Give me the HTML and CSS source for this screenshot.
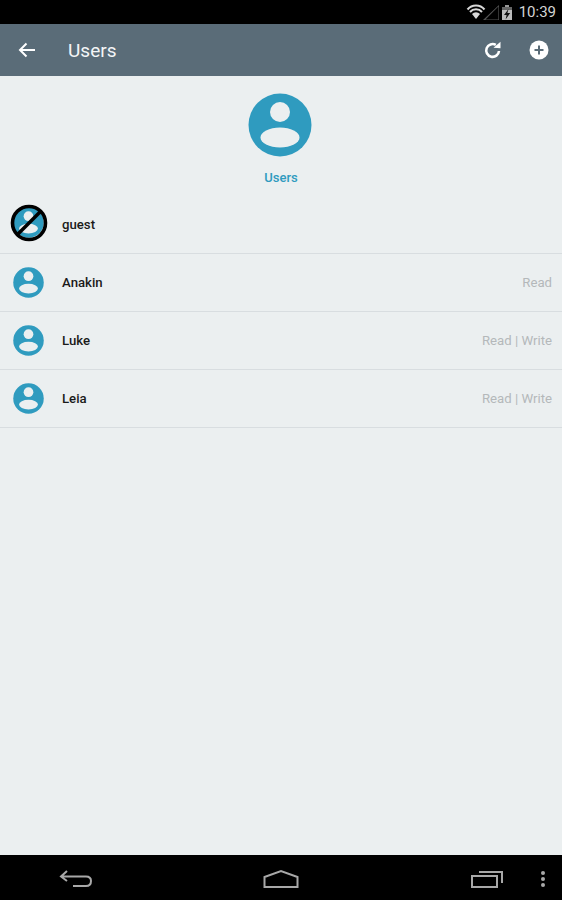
FILE: index.html
```html
<!DOCTYPE html>
<html lang="en">
<head>
    <title>Users</title>
    <link rel="stylesheet" href="styles.css">
</head>
<body>
    <svg class="defs" width="0" height="0">
        <symbol id="person" viewBox="0 0 64 64">
            <circle cx="32" cy="32" r="31.5" fill="#2f9bbf"/>
            <circle cx="32" cy="19" r="10" fill="#ebeff0"/>
            <ellipse cx="32" cy="44.5" rx="19.5" ry="10" fill="#ebeff0"/>
        </symbol>
    </svg>

    <div class="status-bar">
        <svg class="status-icons" width="48" height="20" viewBox="0 0 48 20">
            <path d="M1.5 7.5 A11 11 0 0 1 18.5 7.5 M4 10 A8 8 0 0 1 16 10" fill="none" stroke="#d8d8d8" stroke-width="2"/>
            <path d="M6 12 A5.5 5.5 0 0 1 14 12 L10 17 Z" fill="#d8d8d8"/>
            <path d="M17 18 L33 18 L33 3 Z M19.5 17.4 L32.4 17.4 L32.4 4.5 Z" fill="#555" fill-rule="evenodd"/>
            <rect x="36" y="5" width="10" height="13" fill="#bbb"/>
            <rect x="36" y="5" width="10" height="3" fill="#666"/>
            <rect x="39" y="3" width="4" height="2" fill="#999"/>
            <path d="M42.5 7 L38 13 L40.6 13 L39.6 17.5 L44.2 11 L41.4 11 Z" fill="#111"/>
        </svg>
        <span class="clock">10:39</span>
    </div>

    <nav class="navbar">
        <svg class="back" width="18" height="16" viewBox="0 0 18 16">
            <path d="M17 8 H2 M8.5 1.5 L2 8 L8.5 14.5" fill="none" stroke="#fff" stroke-width="2"/>
        </svg>
        <div class="title">Users</div>
        <svg class="refresh" width="18" height="18" viewBox="0 0 18 18">
            <path d="M15 10 A6.4 6.4 0 1 1 11.8 3.9" fill="none" stroke="#fff" stroke-width="2.6"/>
            <path d="M9.5 6.8 L16.5 7.2 L16.5 0.8 Z" fill="#fff"/>
        </svg>
        <svg class="add" width="20" height="20" viewBox="0 0 20 20">
            <circle cx="10" cy="10" r="9.5" fill="#fff"/>
            <path d="M10 5.5 V14.5 M5.5 10 H14.5" stroke="#5a6c78" stroke-width="2"/>
        </svg>
    </nav>

    <div class="content">
        <div class="header">
            <svg class="header-icon"><use href="#person"/></svg>
            <div class="header-label">Users</div>
        </div>

        <ul class="users">
            <li class="user">
                <span class="avatar avatar-guest">
                    <svg class="avatar-icon"><use href="#person"/></svg>
                    <svg class="ban" width="38" height="38" viewBox="0 0 38 38">
                        <circle cx="19" cy="19" r="16.5" fill="none" stroke="#000" stroke-width="3.6"/>
                        <path d="M7 31 L31 7" stroke="#000" stroke-width="3.6"/>
                    </svg>
                </span>
                <span class="name">guest</span>
            </li>
            <li class="user">
                <span class="avatar"><svg class="avatar-icon"><use href="#person"/></svg></span>
                <span class="name">Anakin</span>
                <span class="perm">Read</span>
            </li>
            <li class="user">
                <span class="avatar"><svg class="avatar-icon"><use href="#person"/></svg></span>
                <span class="name">Luke</span>
                <span class="perm">Read | Write</span>
            </li>
            <li class="user">
                <span class="avatar"><svg class="avatar-icon"><use href="#person"/></svg></span>
                <span class="name">Leia</span>
                <span class="perm">Read | Write</span>
            </li>
        </ul>
    </div>

    <div class="bottom-bar">
        <svg class="nav-back" width="34" height="20" viewBox="0 0 34 20">
            <path d="M8 2 L2 7.5 L8 12 M2 7.5 H27 Q32 7.5 32 12 Q32 17 27 17 H14" fill="none" stroke="#a8a8a8" stroke-width="2"/>
        </svg>
        <svg class="nav-home" width="36" height="20" viewBox="0 0 36 20">
            <path d="M1.5 18 V8 L18 2 L34.5 8 V18 Z" fill="none" stroke="#a8a8a8" stroke-width="2"/>
        </svg>
        <svg class="nav-recent" width="34" height="20" viewBox="0 0 34 20">
            <rect x="2" y="7" width="25" height="11" fill="none" stroke="#a8a8a8" stroke-width="2"/>
            <path d="M9 3 H32 V14" fill="none" stroke="#a8a8a8" stroke-width="2"/>
        </svg>
        <svg class="nav-menu" width="6" height="18" viewBox="0 0 6 18">
            <circle cx="3" cy="3" r="2" fill="#a8a8a8"/>
            <circle cx="3" cy="9" r="2" fill="#a8a8a8"/>
            <circle cx="3" cy="15" r="2" fill="#a8a8a8"/>
        </svg>
    </div>
</body>
</html>
```

FILE: styles.css
```css
* {
    margin: 0;
    padding: 0;
    box-sizing: border-box;
}
body {
    font-family: Roboto, sans-serif;
    background: #ebeff0;
    display: flex;
    flex-direction: column;
    height: 900px;
    overflow: hidden;
}
.defs {
    display: block;
    height: 0;
}
.status-bar {
    display: flex;
    justify-content: flex-end;
    align-items: center;
    background: #000;
    height: 24px;
    padding-right: 6px;
    gap: 5px;
}
.clock {
    color: #d4d4d4;
    font-size: 15px;
}
.navbar {
    display: flex;
    align-items: center;
    background: #5a6c78;
    height: 52px;
    padding: 0 13px 0 18px;
}
.title {
    color: #f4f6f7;
    font-size: 19px;
    margin-left: 32px;
    flex: 1;
}
.refresh {
    margin-right: 27px;
}
.content {
    flex: 1;
}
.header {
    display: flex;
    flex-direction: column;
    align-items: center;
    padding-top: 17px;
}
.header-icon {
    width: 64px;
    height: 64px;
    margin-right: 2px;
}
.header-label {
    color: #2f9bbf;
    font-size: 13px;
    font-weight: 500;
    margin-top: 13px;
    margin-bottom: 11px;
    line-height: 15px;
}
.users {
    list-style: none;
}
.user {
    display: flex;
    align-items: center;
    height: 58px;
    padding: 0 10px 0 13px;
    border-bottom: 1px solid #d8dde0;
}
.avatar {
    position: relative;
    display: flex;
    width: 31px;
    height: 31px;
    margin-right: 18px;
}
.avatar-guest {
    margin-top: -4px;
}
.avatar-icon {
    width: 31px;
    height: 31px;
}
.ban {
    position: absolute;
    left: -3.5px;
    top: -3.5px;
}
.name {
    flex: 1;
    color: #1a1a1a;
    font-size: 13.2px;
    font-weight: 500;
}
.perm {
    color: #b4b8ba;
    font-size: 13.2px;
}
.bottom-bar {
    position: relative;
    background: #000;
    height: 45px;
    flex-shrink: 0;
}
.bottom-bar svg {
    position: absolute;
    top: 14px;
}
.bottom-bar .nav-back {
    left: 59px;
}
.bottom-bar .nav-home {
    left: 263px;
}
.bottom-bar .nav-recent {
    left: 470px;
}
.bottom-bar .nav-menu {
    left: 540px;
    top: 15px;
}
```
